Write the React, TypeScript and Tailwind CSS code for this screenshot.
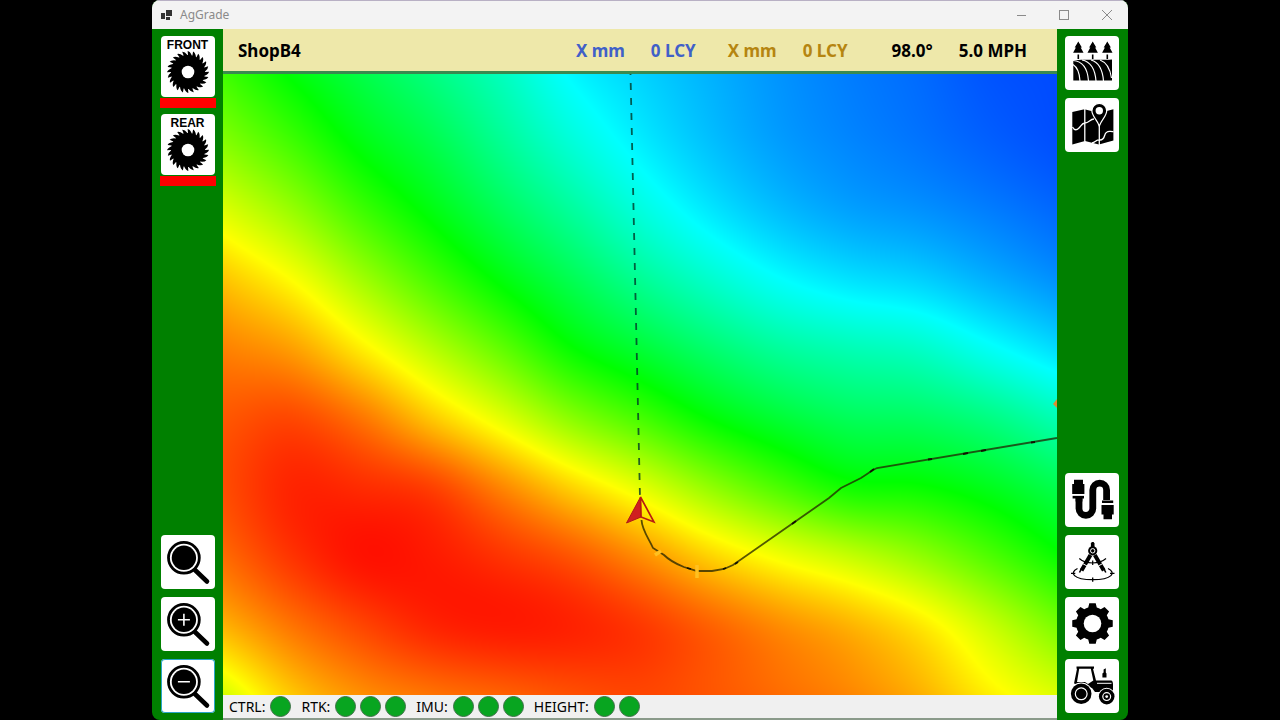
import { useEffect, useRef } from "react";
import type { ReactNode } from "react";

// Field heights, one row per survey line. 0 is red, 1 yellow, 2 green, 3 cyan, 4 blue.
const ELEVATION = [
	[1.75, 2.03, 2.28, 2.5, 2.74, 3.02, 3.17, 3.3, 3.42, 3.51, 3.58, 3.67, 3.71],
	[1.47, 1.75, 2.06, 2.29, 2.57, 2.84, 3.06, 3.24, 3.38, 3.47, 3.54, 3.62, 3.69],
	[1.12, 1.4, 1.75, 2.05, 2.34, 2.6, 2.86, 3.08, 3.25, 3.36, 3.42, 3.5, 3.59],
	[0.76, 1.0, 1.36, 1.71, 2.03, 2.31, 2.57, 2.79, 2.98, 3.1, 3.17, 3.3, 3.43],
	[0.5, 0.62, 0.93, 1.27, 1.61, 1.97, 2.2, 2.42, 2.6, 2.7, 2.77, 2.95, 3.13],
	[0.34, 0.28, 0.46, 0.78, 1.1, 1.45, 1.72, 2.0, 2.2, 2.34, 2.38, 2.5, 2.7],
	[0.3, 0.14, 0.17, 0.25, 0.52, 0.82, 1.1, 1.42, 1.7, 1.93, 1.97, 2.1, 2.3],
	[0.42, 0.2, 0.07, 0.1, 0.2, 0.33, 0.55, 0.82, 1.04, 1.22, 1.42, 1.68, 1.96],
	[0.7, 0.45, 0.27, 0.14, 0.1, 0.13, 0.22, 0.38, 0.55, 0.7, 0.9, 1.2, 1.52],
	[1.17, 0.78, 0.56, 0.45, 0.38, 0.31, 0.27, 0.33, 0.42, 0.52, 0.68, 0.93, 1.13],
];

const cubic = (a: number, b: number, c: number, d: number, t: number) =>
	b + 0.5 * t * (c - a + t * (2 * a - 5 * b + 4 * c - d + t * (3 * (b - c) + d - a)));

const sampleRow = (row: number[], x: number) => {
	const last = row.length - 1;
	const i = Math.min(Math.floor(x), last - 1);
	const left = i > 0 ? row[i - 1] : 2 * row[0] - row[1];
	const right = i + 2 <= last ? row[i + 2] : 2 * row[last] - row[last - 1];
	return cubic(left, row[i], row[i + 1], right, x - i);
};

const heightColor = (v: number) => {
	const h = Math.max(0, Math.min(4, v));
	const up = (n: number) => Math.round(255 * Math.max(0, Math.min(1, n)));
	return [up(2 - h), h < 2 ? up(h) : up(4 - h), up(h - 2)];
};

const ElevationLayer = () => {
	const ref = useRef<HTMLCanvasElement>(null);

	useEffect(() => {
		const canvas = ref.current;
		const ctx = canvas?.getContext("2d");
		if (!canvas || !ctx) return;
		const { width, height } = canvas;
		const image = ctx.createImageData(width, height);
		for (let x = 0; x < width; x++) {
			const gx = (x / (width - 1)) * (ELEVATION[0].length - 1);
			const column = ELEVATION.map((row) => sampleRow(row, gx));
			for (let y = 0; y < height; y++) {
				const gy = (y / (height - 1)) * (ELEVATION.length - 1);
				const [r, g, b] = heightColor(sampleRow(column, gy));
				image.data.set([r, g, b, 255], (y * width + x) * 4);
			}
		}
		ctx.putImageData(image, 0, 0);
	}, []);

	return <canvas ref={ref} width={834} height={621} className="absolute inset-0 h-full w-full" />;
};

const Icon = ({ children }: { children: ReactNode }) => (
	<svg viewBox="0 0 54 54" className="h-full w-full" fill="black" stroke="none" aria-hidden="true">
		{children}
	</svg>
);

const polar = (r: number, deg: number) => {
	const a = (deg * Math.PI) / 180;
	return `${(r * Math.cos(a)).toFixed(2)} ${(r * Math.sin(a)).toFixed(2)}`;
};

const SAW_PATH =
	Array.from({ length: 24 }, (_, i) => {
		const a = i * 15;
		return `${i ? "L" : "M"}${polar(17, a)}L${polar(21, a - 1)}Q${polar(20.6, a + 6)} ${polar(17, a + 13)}`;
	}).join("") + "Z";

const GEAR_PATH =
	Array.from({ length: 8 }, (_, i) => {
		const a = i * 45;
		return `${i ? "L" : "M"}${polar(16.5, a - 15)}L${polar(20.5, a - 9)}L${polar(20.5, a + 9)}L${polar(16.5, a + 15)}A16.5 16.5 0 0 1 ${polar(16.5, a + 30)}`;
	}).join("") + "Z";

const BladeButton = ({ name }: { name: string }) => (
	<div className="flex flex-col items-center gap-px">
		<button className="flex h-[61px] w-[54px] flex-col items-center rounded bg-white pt-[3px]">
			<span className="font-['Liberation_Sans',sans-serif] text-xs leading-3 font-bold">{name}</span>
			<svg viewBox="-21 -21 42 42" className="h-[42px] w-[42px]" aria-hidden="true">
				<path d={SAW_PATH} />
				<circle r="6.3" fill="white" />
			</svg>
		</button>
		<div className="h-[10px] w-[56px] bg-[#ff0000]" />
	</div>
);

const ToolButton = ({ label, focused, children }: { label: string; focused?: boolean; children: ReactNode }) => (
	<button aria-label={label} className={`h-[54px] w-[54px] rounded bg-white ${focused ? "ring-1 ring-[#2aa5c8] ring-inset" : ""}`}>
		<Icon>{children}</Icon>
	</button>
);

const Magnifier = ({ children }: { children?: ReactNode }) => (
	<>
		<path d="M34 35L46 46.5" stroke="black" strokeWidth="4.6" strokeLinecap="round" />
		<circle cx="22.9" cy="22.8" r="15.4" fill="white" stroke="black" strokeWidth="2.8" />
		<circle cx="22.9" cy="22.8" r="12.2" />
		{children}
	</>
);

const FieldIcon = () => (
	<>
		{[13.3, 27.7, 42.3].map((x) => (
			<path key={x} transform={`translate(${x} 0)`} d="M0 5.5L3.6 11.4H2.4L5.2 16.8H-5.2L-2.4 11.4H-3.6ZM-.8 18.5H.8V23H-.8Z" />
		))}
		<path d="M8.3 24.5C14 23 34 24.5 47 23.5V44.6H8.3Z" />
		<path
			d="M8 28.5C12 31 14.5 36 15 45M8 24.5C16 25 22.5 31 23.5 45M17 24C25 25.5 30 32 31 45M26 24C33 26 37.500 32 38.500 45M35 24C42 26.500 45 32 46.500 42"
			fill="none" stroke="white" strokeWidth="1.2"
		/>
	</>
);

const MapIcon = () => (
	<>
		<path d="M7.3 14L19.5 11.3L34 15L48.4 11.3V42.5L34 46.5L20 43L7.3 46.5Z" />
		<path d="M19.8 11V43.5M34.3 27V47M7.5 29C9.5 33 12 32 14 30C16 28 17 25 20 25C24 25 25 21 29 21M27 45C31 44 31 41.5 35 42C41 42 38 36 42 34C44 32.5 46 34 48.5 33.5" fill="none" stroke="white" strokeWidth="1.3" />
		<path d="M34.3 5.3A7.4 7.4 0 0 1 41.7 12.8C41.7 18 37 21 34.3 28C31.6 21 26.9 18 26.9 12.8A7.4 7.4 0 0 1 34.3 5.3Z" stroke="white" strokeWidth="1.2" />
		<circle cx="34.3" cy="12.8" r="3.7" fill="white" />
	</>
);

const CableIcon = () => (
	<>
		<path d="M14 25V35.5A6.9 6.9 0 0 0 27.8 35.5V17A6.9 6.9 0 0 1 41.6 17V27" fill="none" stroke="black" strokeWidth="6.8" />
		<path d="M9 6.8H18V11H19.4V21H7.2V11H9ZM7.6 22.8H19V25.5H17.4V28.500H10.600V25.500H7.600Z" />
		<path d="M36.5 32H48.7V41.5H47V46.2H38.5V41.5H36.5ZM37 27.5H48.2V30H37Z" />
		<path d="M36 30.8H49M7 21.9H19.5" stroke="white" strokeWidth="1.3" />
	</>
);

const CompassIcon = () => (
	<>
		<path d="M25.5 20L16.5 35.5M29.8 20L38.8 35.5" stroke="black" strokeWidth="4" />
		<path d="M16.8 33L14.5 37.5M38.5 33L40.8 37.5" stroke="black" strokeWidth="1.6" />
		<path d="M17.5 28.5L22 31M37.8 28.5L33.3 31" stroke="white" strokeWidth="1" />
		<path d="M14.3 23.5C21 29.5 34 29.5 41 23.5M27.7 25.5V30" fill="none" stroke="black" strokeWidth="1.2" />
		<path d="M25.9 12V8.5L26.8 7H28.6L29.5 8.5V12Z" />
		<circle cx="27.7" cy="15.8" r="4.6" />
		<circle cx="27.7" cy="15.8" r="2.2" fill="none" stroke="white" strokeWidth="1" />
		<path d="M12.5 33.5C4 37.5 8 44.7 27.7 44.7S51.5 37.5 43 33.5M27.7 42.5V46.8M6 38.3H10.3M45 38.3H49.5" fill="none" stroke="black" strokeWidth="1.3" />
	</>
);

const TractorIcon = () => (
	<>
		<path fillRule="evenodd" d="M11.5 7.5H29V9.7H28L31 21.5H46.5Q48 22 48 25V33H30L27 29L9 24.5L12 9.7H11.5ZM14.2 9.7L12 23H20L23 25L28.3 21.5L25.8 9.7Z" />
		<path d="M32 24.3H46.5" stroke="white" strokeWidth="1" />
		<path d="M37.4 18.5V14.5L38.6 13.5V10.5L40.8 9.3V13.5L41.5 14.5V18.5Z" />
		<circle cx="16.2" cy="34.8" r="11.4" fill="white" />
		<circle cx="16.2" cy="34.8" r="10.3" />
		<circle cx="16.2" cy="34.8" r="5.9" fill="none" stroke="white" strokeWidth="1.2" />
		<circle cx="41.7" cy="37.6" r="8.8" fill="white" />
		<circle cx="41.7" cy="37.6" r="7.8" />
		<circle cx="41.7" cy="37.6" r="3.9" fill="none" stroke="white" strokeWidth="1.2" />
		<circle cx="41.7" cy="37.6" r="1.4" fill="white" />
	</>
);

const FieldMap = () => (
	<main className="relative min-h-0 flex-1 overflow-hidden">
		<ElevationLayer />
		<svg viewBox="0 0 834 621" preserveAspectRatio="none" className="absolute inset-0 h-full w-full" fill="none">
			<path d="M407.5 0L417 424" stroke="#003828" strokeOpacity="0.8" strokeWidth="1.8" strokeDasharray="7 8" strokeDashoffset="6" />
			<path
				d="M418.5 446C419 456 426 465 430 474L441 481C448 488 456 491 461 493L474 497L489 497L501 495L510 491L606 424L618 414L638 404L650 396L654 394L834 364"
				stroke="#222200" strokeOpacity="0.75" strokeWidth="1.8"
			/>
			<path d="M464 494L468 495M500 495L503 494M512 490L515 488M569 450L573 447M647 398L651 395M705 385.5L709 385M740 380L745 379M758 377L763 376M808 368.5L812 368" stroke="#111100" strokeWidth="1.8" />
			<path d="M432 481L438 477M474 491V504" stroke="#ffc020" strokeWidth="3.5" />
			<path d="M417.5 423L403.5 449L418 443Z" fill="#d02020" stroke="#b01818" />
			<path d="M417.5 423L431 448L418 443Z" stroke="#b81c10" strokeWidth="1.6" />
			<path d="M834 325L830 330L834 334Z" fill="#e08a30" />
		</svg>
	</main>
);

const STATUS = [
	{ label: "CTRL:", count: 1 },
	{ label: "RTK:", count: 3 },
	{ label: "IMU:", count: 3 },
	{ label: "HEIGHT:", count: 2 },
];

const TitleBar = () => (
	<div className="flex h-[29px] shrink-0 items-center border-t border-[#b8b0c4] bg-[#f3f3f3] pl-[9px] text-[#8a8a8a]">
		<svg viewBox="0 0 12 11" className="mr-[7px] h-[11px] w-3" aria-hidden="true">
			<path d="M0 3H4V9H0ZM5 0H11V6H5ZM5 7H9V10H5Z" fill="#333" />
		</svg>
		<span className="flex-1 text-xs">AgGrade</span>
		<button aria-label="Minimize" className="flex h-full w-[42px] items-center justify-center">
			<svg viewBox="0 0 10 10" className="h-[10px] w-[10px]" stroke="currentColor"><path d="M0 5.5H9" /></svg>
		</button>
		<button aria-label="Maximize" className="flex h-full w-[42px] items-center justify-center">
			<svg viewBox="0 0 10 10" className="h-[10px] w-[10px]" stroke="currentColor" fill="none"><rect x=".5" y=".5" width="9" height="9" /></svg>
		</button>
		<button aria-label="Close" className="flex h-full w-[43px] items-center justify-center">
			<svg viewBox="0 0 10 10" className="h-[10px] w-[10px]" stroke="currentColor"><path d="M0 0L10 10M10 0L0 10" /></svg>
		</button>
	</div>
);

export default function App() {
	return (
		<div className="flex h-screen bg-black px-[152px] font-['Noto_Sans',sans-serif] text-black">
			<div className="flex min-w-0 flex-1 flex-col overflow-hidden rounded-lg bg-[#008000]">
				<TitleBar />
				<div className="flex min-h-0 flex-1">
					<aside className="flex w-[71px] shrink-0 flex-col items-center justify-between pt-[7px] pb-[7px]">
						<div className="flex flex-col gap-[6px]">
							<BladeButton name="FRONT" />
							<BladeButton name="REAR" />
						</div>
						<div className="flex flex-col gap-2">
							<ToolButton label="Zoom to fit"><Magnifier /></ToolButton>
							<ToolButton label="Zoom in">
								<Magnifier><path d="M16.9 22.8H28.9M22.9 16.8V28.8" stroke="white" strokeWidth="1.6" /></Magnifier>
							</ToolButton>
							<ToolButton label="Zoom out" focused>
								<Magnifier><path d="M16.9 22.8H28.9" stroke="white" strokeWidth="1.6" /></Magnifier>
							</ToolButton>
						</div>
					</aside>

					<div className="flex min-w-0 flex-1 flex-col">
						<header className="flex h-[45px] shrink-0 items-center border-b-3 border-[#3a8a50] bg-[#eee8aa] pt-[2px] pr-[30px] pl-[15px] text-[17px] font-bold whitespace-nowrap">
							<h1 className="flex-1">ShopB4</h1>
							<div className="flex gap-[26px] text-[#4060c8]">
								<span>X mm</span>
								<span>0 LCY</span>
							</div>
							<div className="ml-8 flex gap-[26px] text-[#b58510]">
								<span>X mm</span>
								<span>0 LCY</span>
							</div>
							<span className="ml-11">98.0°</span>
							<span className="ml-[26px]">5.0 MPH</span>
						</header>

						<FieldMap />

						<footer className="flex h-[25px] shrink-0 items-center gap-[10px] border-b-2 border-[#8a9a8a] bg-[#f0f0f0] pl-[6px] text-sm">
							{STATUS.map((item) => (
								<div key={item.label} className="flex items-center gap-1">
									<span className="mr-px">{item.label}</span>
									{Array.from({ length: item.count }, (_, i) => (
										<span key={i} className="h-[21px] w-[21px] rounded-full border border-[#3f7048] bg-[#08a520]" />
									))}
								</div>
							))}
						</footer>
					</div>

					<aside className="flex w-[71px] shrink-0 flex-col items-center justify-between pt-[7px] pr-px pb-[7px]">
						<div className="flex flex-col gap-2">
							<ToolButton label="Field"><FieldIcon /></ToolButton>
							<ToolButton label="Map"><MapIcon /></ToolButton>
						</div>
						<div className="flex flex-col gap-2">
							<ToolButton label="Connections"><CableIcon /></ToolButton>
							<ToolButton label="Calibration"><CompassIcon /></ToolButton>
							<ToolButton label="Settings">
								<g transform="translate(27.5 26.5)">
									<path d={GEAR_PATH} />
									<circle r="8.8" fill="white" />
								</g>
							</ToolButton>
							<ToolButton label="Equipment"><TractorIcon /></ToolButton>
						</div>
					</aside>
				</div>
			</div>
		</div>
	);
}
